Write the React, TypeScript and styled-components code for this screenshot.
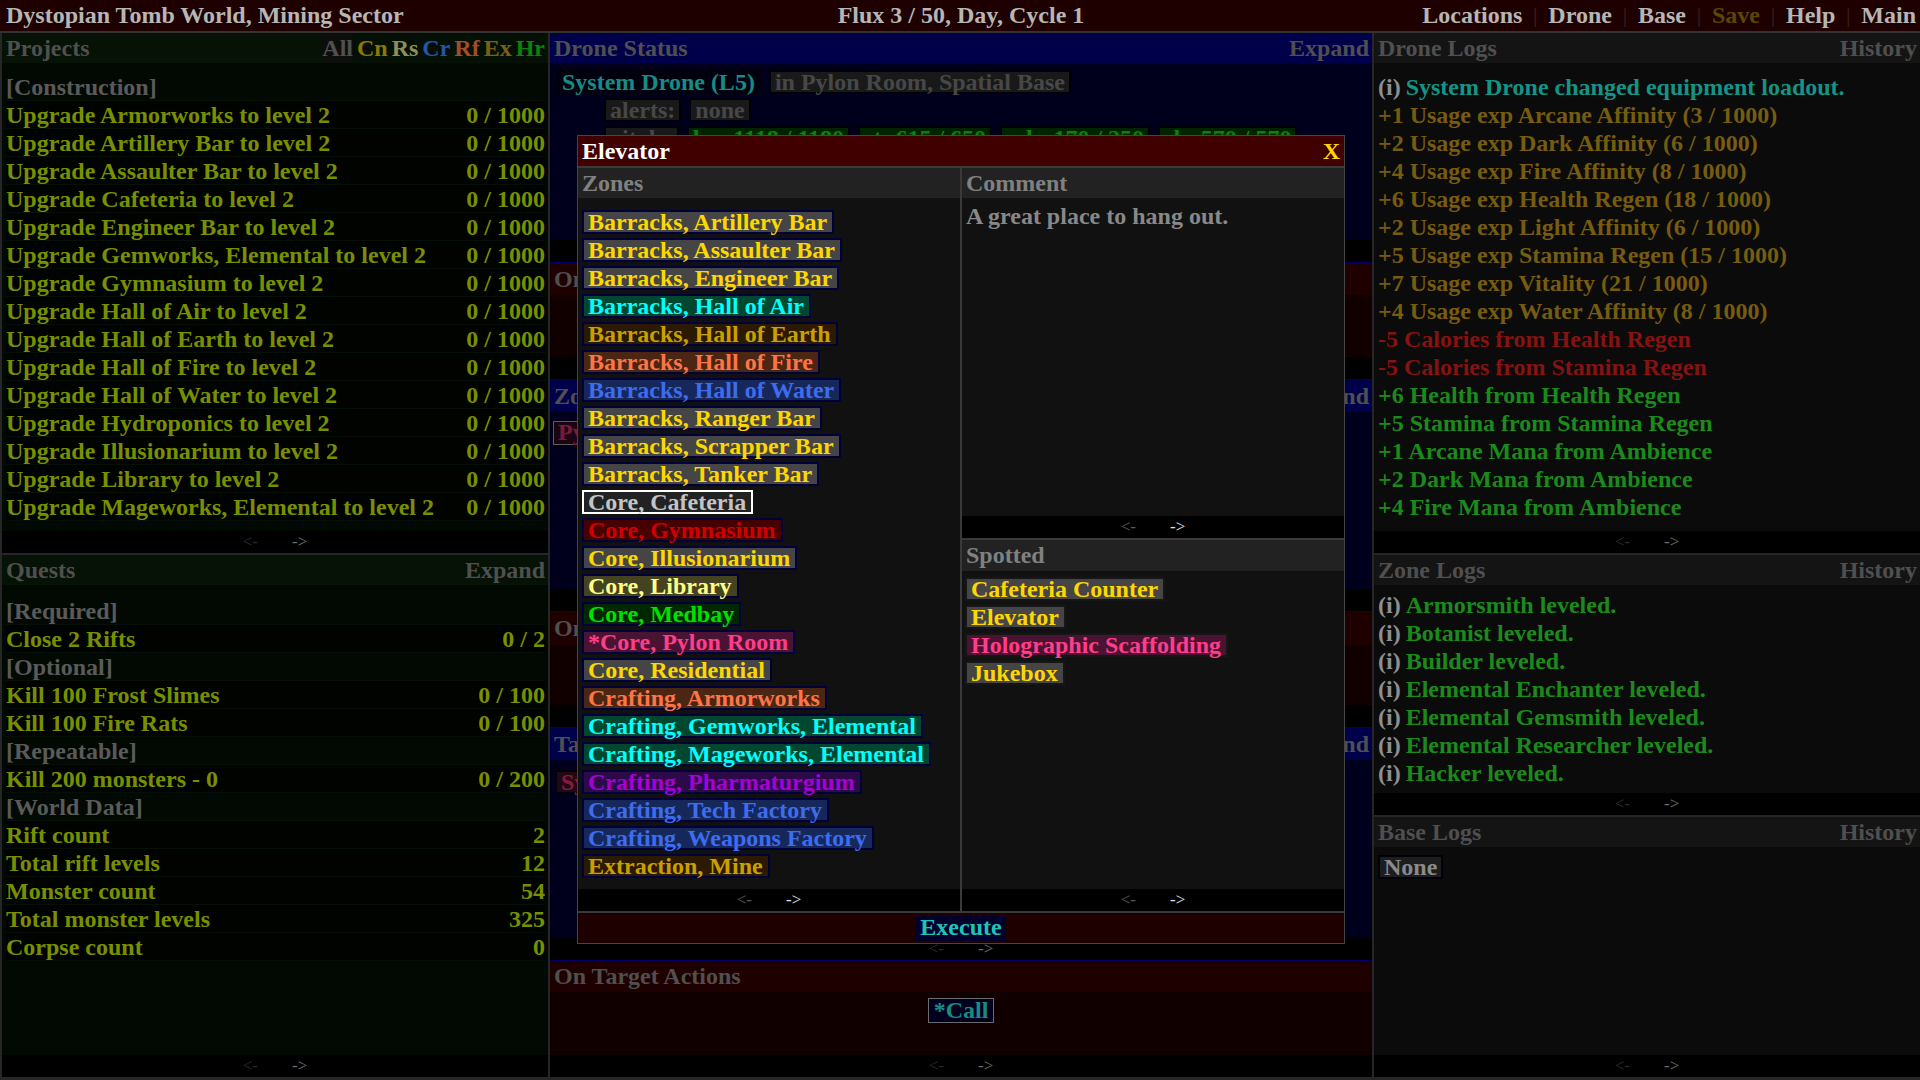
import React from "react";
import styled, { createGlobalStyle, css } from "styled-components";

const GlobalStyle = createGlobalStyle`
  html, body { margin: 0; padding: 0; background: #000; }
  body {
    font-family: "Liberation Serif", "Times New Roman", serif;
    font-weight: bold;
    font-size: 24px;
    overflow: hidden;
  }
  * { box-sizing: border-box; }
`;

type Theme = "green" | "blue" | "red" | "gray";

const themes: Record<Theme, { head: string; body: string; line: string }> = {
  green: { head: "#051205", body: "#020902", line: "#0a1a0a" },
  blue: { head: "#00004a", body: "#00001c", line: "#00006a" },
  red: { head: "#1f0000", body: "#110000", line: "#00006a" },
  gray: { head: "#141414", body: "#0b0b0b", line: "#1a1a1a" },
};

const Page = styled.div`
  position: relative;
  width: 1920px;
  height: 1080px;
  display: flex;
  flex-direction: column;
  background: #262626;
`;

const TopBar = styled.header`
  flex: none;
  height: 33px;
  display: grid;
  grid-template-columns: 1fr auto 1fr;
  align-items: center;
  background: #1e0000;
  border-bottom: 2px solid #333;
  padding: 0 4px 0 6px;
  color: #b6b6b6;
  line-height: 31px;
  white-space: nowrap;
`;

const Nav = styled.nav`
  justify-self: end;
  display: flex;
  align-items: center;
`;

const NavItem = styled.span<{ $dim?: boolean }>`
  color: ${(p) => (p.$dim ? "#5c4600" : "#b6b6b6")};
`;

const NavSep = styled.span`
  color: #3c2424;
  font-weight: normal;
  font-size: 20px;
  margin: 0 11px;
`;

const Columns = styled.main`
  flex: 1;
  min-height: 0;
  display: grid;
  grid-template-columns: 546px 822px 1fr;
  column-gap: 2px;
  padding: 0 0 3px 2px;
`;

const Column = styled.div<{ $gap: number }>`
  display: flex;
  flex-direction: column;
  gap: ${(p) => p.$gap}px;
  min-height: 0;
  overflow: hidden;
`;

const Section = styled.section<{ $theme: Theme; $h?: number; $line?: boolean }>`
  display: flex;
  flex-direction: column;
  background: ${(p) => themes[p.$theme].body};
  ${(p) => (p.$h ? css`flex: none; height: ${p.$h}px;` : css`flex: 1;`)}
  ${(p) => p.$line && css`border-top: 1px solid ${themes[p.$theme].line};`}
  min-height: 0;
  overflow: hidden;
`;

const SectionHead = styled.div<{ $theme: Theme; $h?: number }>`
  flex: none;
  height: ${(p) => p.$h ?? 30}px;
  display: flex;
  align-items: center;
  justify-content: space-between;
  background: ${(p) => themes[p.$theme].head};
  color: #4f4f4f;
  padding: 0 3px 0 4px;
  white-space: nowrap;
`;

const HeadAction = styled.span`
  color: #4f4f4f;
`;

const Filters = styled.div`
  display: flex;
  align-self: stretch;
  align-items: center;
  gap: 4px;
  background: #031003;
`;

const FilterTab = styled.span<{ $c: string; $sel?: boolean }>`
  color: ${(p) => p.$c};
  align-self: stretch;
  display: flex;
  align-items: center;
  background: ${(p) => (p.$sel ? "#0c0e0c" : "transparent")};
`;

const Body = styled.div<{ $pt?: number; $px?: number }>`
  flex: 1;
  min-height: 0;
  padding: ${(p) => p.$pt ?? 10}px ${(p) => p.$px ?? 3}px 0 ${(p) => p.$px ?? 4}px;
  overflow: hidden;
`;

const Row = styled.div<{ $kind: "cat" | "item" }>`
  height: 28px;
  line-height: 28px;
  display: flex;
  justify-content: space-between;
  white-space: nowrap;
  color: ${(p) => (p.$kind === "cat" ? "#5a5a5a" : "#789000")};
  background: ${(p) => (p.$kind === "cat" ? "transparent" : "#010301")};
  box-shadow: inset 0 -1px 0 #071007;
`;

const Pager = styled.div<{ $bright?: boolean }>`
  flex: none;
  height: 22px;
  background: #000;
  display: flex;
  justify-content: center;
  align-items: center;
  gap: 34px;
  font-weight: normal;
  font-size: 17px;
  line-height: 22px;
  & > span:first-child { color: ${(p) => (p.$bright ? "#5c5c5c" : "#2c2c2c")}; }
  & > span:last-child { color: ${(p) => (p.$bright ? "#e0e0e0" : "#707070")}; }
`;

const LogLine = styled.div<{ $c: string }>`
  height: 28px;
  line-height: 28px;
  white-space: nowrap;
  color: ${(p) => p.$c};
`;

const Info = styled.span`
  color: #8f8f8f;
  margin-right: 5px;
`;

const ChipRow = styled.div<{ $indent?: number }>`
  display: flex;
  gap: 8px;
  height: 28px;
  align-items: center;
  padding-left: ${(p) => p.$indent ?? 0}px;
  white-space: nowrap;
`;

const DimChip = styled.span<{ $fg: string; $bg: string; $bd?: string }>`
  display: inline-block;
  height: 24px;
  line-height: 20px;
  padding: 0 4px;
  border: ${(p) => (p.$bd ? `1px solid ${p.$bd}` : "2px solid #000008")};
  background: ${(p) => p.$bg};
  color: ${(p) => p.$fg};
`;

const ActionArea = styled.div`
  flex: 1;
  display: flex;
  justify-content: center;
  padding-top: 6px;
`;

const CallButton = styled.span`
  display: inline-block;
  height: 25px;
  line-height: 22px;
  padding: 0 5px;
  border: 1px solid #6c6c6c;
  background: #00001e;
  color: #178c82;
`;

/* ---------- Modal ---------- */

const Modal = styled.div`
  position: absolute;
  left: 577px;
  top: 135px;
  width: 768px;
  height: 809px;
  border: 1px solid #454545;
  background: #111;
  display: flex;
  flex-direction: column;
`;

const ModalTitle = styled.div`
  flex: none;
  height: 32px;
  border-bottom: 2px solid #3a3a3a;
  background: #400000;
  display: flex;
  align-items: center;
  justify-content: space-between;
  padding: 0 4px 0 4px;
  color: #fff;
  line-height: 30px;
`;

const CloseX = styled.span`
  color: #ffd700;
`;

const Panes = styled.div`
  flex: 1;
  min-height: 0;
  display: grid;
  grid-template-columns: 1fr 1fr;
  column-gap: 2px;
  background: #3a3a3a;
`;

const Pane = styled.div`
  display: flex;
  flex-direction: column;
  background: #111;
  min-height: 0;
`;

const PaneHead = styled.div<{ $top?: boolean }>`
  flex: none;
  height: ${(p) => (p.$top ? 33 : 30)}px;
  background: #222;
  color: #808080;
  padding: 0 4px;
  line-height: 30px;
  ${(p) => p.$top && css`border-top: 2px solid #3a3a3a;`}
`;

const ChipList = styled.div<{ $pt: number; $pl: number }>`
  flex: 1;
  min-height: 0;
  display: flex;
  flex-direction: column;
  align-items: flex-start;
  gap: 4px;
  padding: ${(p) => p.$pt}px 0 0 ${(p) => p.$pl}px;
`;

const ZoneChip = styled.span<{ $fg: string; $bg: string; $bd: string }>`
  display: inline-block;
  height: 24px;
  line-height: 20px;
  padding: 0 5px 0 4px;
  border: 2px solid ${(p) => p.$bd};
  background: ${(p) => p.$bg};
  color: ${(p) => p.$fg};
  white-space: nowrap;
`;

const CommentBody = styled.div`
  flex: none;
  height: 318px;
  padding: 4px 4px 0;
  color: #888;
  line-height: 28px;
`;

const ExecuteBar = styled.div`
  flex: none;
  height: 32px;
  border-top: 2px solid #3a3a3a;
  background: #1e0000;
  display: flex;
  justify-content: center;
  align-items: center;
`;

const ExecuteButton = styled.span`
  display: inline-block;
  height: 25px;
  line-height: 22px;
  padding: 0 4px;
  background: #00002c;
  color: #1fc4b6;
`;

/* ---------- Data ---------- */

const zonePalette = {
  bar: { fg: "#ffd700", bg: "#454545" },
  air: { fg: "#00ffff", bg: "#00472f" },
  earth: { fg: "#c9a000", bg: "#2b1a00" },
  fire: { fg: "#ff7446", bg: "#4b2612" },
  water: { fg: "#3e6cf0", bg: "#16285a" },
  selected: { fg: "#c4c4c4", bg: "#222222" },
  gym: { fg: "#d00000", bg: "#470000" },
  library: { fg: "#ffff88", bg: "#45431f" },
  medbay: { fg: "#00e000", bg: "#002800" },
  pylon: { fg: "#ff3d8a", bg: "#4a1332" },
  pharma: { fg: "#a600d8", bg: "#2c0a47" },
};
type ZTone = keyof typeof zonePalette;

const zones: [string, ZTone][] = [
  ["Barracks, Artillery Bar", "bar"],
  ["Barracks, Assaulter Bar", "bar"],
  ["Barracks, Engineer Bar", "bar"],
  ["Barracks, Hall of Air", "air"],
  ["Barracks, Hall of Earth", "earth"],
  ["Barracks, Hall of Fire", "fire"],
  ["Barracks, Hall of Water", "water"],
  ["Barracks, Ranger Bar", "bar"],
  ["Barracks, Scrapper Bar", "bar"],
  ["Barracks, Tanker Bar", "bar"],
  ["Core, Cafeteria", "selected"],
  ["Core, Gymnasium", "gym"],
  ["Core, Illusionarium", "bar"],
  ["Core, Library", "library"],
  ["Core, Medbay", "medbay"],
  ["*Core, Pylon Room", "pylon"],
  ["Core, Residential", "bar"],
  ["Crafting, Armorworks", "fire"],
  ["Crafting, Gemworks, Elemental", "air"],
  ["Crafting, Mageworks, Elemental", "air"],
  ["Crafting, Pharmaturgium", "pharma"],
  ["Crafting, Tech Factory", "water"],
  ["Crafting, Weapons Factory", "water"],
  ["Extraction, Mine", "earth"],
];

const spotted: [string, ZTone][] = [
  ["Cafeteria Counter", "bar"],
  ["Elevator", "bar"],
  ["Holographic Scaffolding", "pylon"],
  ["Jukebox", "bar"],
];

const projects = [
  "Armorworks", "Artillery Bar", "Assaulter Bar", "Cafeteria", "Engineer Bar",
  "Gemworks, Elemental", "Gymnasium", "Hall of Air", "Hall of Earth", "Hall of Fire",
  "Hall of Water", "Hydroponics", "Illusionarium", "Library", "Mageworks, Elemental",
];

const quests: [string, string | null][] = [
  ["[Required]", null],
  ["Close 2 Rifts", "0 / 2"],
  ["[Optional]", null],
  ["Kill 100 Frost Slimes", "0 / 100"],
  ["Kill 100 Fire Rats", "0 / 100"],
  ["[Repeatable]", null],
  ["Kill 200 monsters - 0", "0 / 200"],
  ["[World Data]", null],
  ["Rift count", "2"],
  ["Total rift levels", "12"],
  ["Monster count", "54"],
  ["Total monster levels", "325"],
  ["Corpse count", "0"],
];

const GOLD = "#765c0e";
const RED = "#861212";
const GREEN = "#1b8a1b";
const TEAL = "#149486";

const droneLogs: [string, string][] = [
  ["+1 Usage exp Arcane Affinity (3 / 1000)", GOLD],
  ["+2 Usage exp Dark Affinity (6 / 1000)", GOLD],
  ["+4 Usage exp Fire Affinity (8 / 1000)", GOLD],
  ["+6 Usage exp Health Regen (18 / 1000)", GOLD],
  ["+2 Usage exp Light Affinity (6 / 1000)", GOLD],
  ["+5 Usage exp Stamina Regen (15 / 1000)", GOLD],
  ["+7 Usage exp Vitality (21 / 1000)", GOLD],
  ["+4 Usage exp Water Affinity (8 / 1000)", GOLD],
  ["-5 Calories from Health Regen", RED],
  ["-5 Calories from Stamina Regen", RED],
  ["+6 Health from Health Regen", GREEN],
  ["+5 Stamina from Stamina Regen", GREEN],
  ["+1 Arcane Mana from Ambience", GREEN],
  ["+2 Dark Mana from Ambience", GREEN],
  ["+4 Fire Mana from Ambience", GREEN],
];

const zoneLogs = [
  "Armorsmith leveled.",
  "Botanist leveled.",
  "Builder leveled.",
  "Elemental Enchanter leveled.",
  "Elemental Gemsmith leveled.",
  "Elemental Researcher leveled.",
  "Hacker leveled.",
];

const filters: [string, string][] = [
  ["Cn", "#8c7a00"],
  ["Rs", "#8e8e58"],
  ["Cr", "#2a52a8"],
  ["Rf", "#a44c2a"],
  ["Ex", "#7c6012"],
  ["Hr", "#0c820c"],
];

const PagerBar = ({ bright }: { bright?: boolean }) => (
  <Pager $bright={bright}>
    <span>&lt;-</span>
    <span>-&gt;</span>
  </Pager>
);

export default function App() {
  return (
    <>
      <GlobalStyle />
      <Page>
        <TopBar>
          <span>Dystopian Tomb World, Mining Sector</span>
          <span>Flux 3 / 50, Day, Cycle 1</span>
          <Nav>
            <NavItem>Locations</NavItem>
            <NavSep>|</NavSep>
            <NavItem>Drone</NavItem>
            <NavSep>|</NavSep>
            <NavItem>Base</NavItem>
            <NavSep>|</NavSep>
            <NavItem $dim>Save</NavItem>
            <NavSep>|</NavSep>
            <NavItem>Help</NavItem>
            <NavSep>|</NavSep>
            <NavItem>Main</NavItem>
          </Nav>
        </TopBar>

        <Columns>
          {/* Left column */}
          <Column $gap={2}>
            <Section $theme="green" $h={520}>
              <SectionHead $theme="green">
                <span>Projects</span>
                <Filters>
                  <FilterTab $c="#505050" $sel>All</FilterTab>
                  {filters.map(([f, c]) => (
                    <FilterTab key={f} $c={c}>{f}</FilterTab>
                  ))}
                </Filters>
              </SectionHead>
              <Body>
                <Row $kind="cat"><span>[Construction]</span></Row>
                {projects.map((p) => (
                  <Row $kind="item" key={p}>
                    <span>Upgrade {p} to level 2</span>
                    <span>0 / 1000</span>
                  </Row>
                ))}
              </Body>
              <PagerBar />
            </Section>
            <Section $theme="green">
              <SectionHead $theme="green">
                <span>Quests</span>
                <HeadAction>Expand</HeadAction>
              </SectionHead>
              <Body $pt={12}>
                {quests.map(([n, v]) => (
                  <Row $kind={v === null ? "cat" : "item"} key={n}>
                    <span>{n}</span>
                    {v !== null && <span>{v}</span>}
                  </Row>
                ))}
              </Body>
              <PagerBar />
            </Section>
          </Column>

          {/* Middle column */}
          <Column $gap={0}>
            <Section $theme="blue" $h={229}>
              <SectionHead $theme="blue">
                <span>Drone Status</span>
                <HeadAction>Expand</HeadAction>
              </SectionHead>
              <Body $pt={5} $px={6}>
                <ChipRow>
                  <DimChip $fg="#178c84" $bg="#00000f">System Drone (L5)</DimChip>
                  <DimChip $fg="#474747" $bg="#191919">in Pylon Room, Spatial Base</DimChip>
                </ChipRow>
                <ChipRow $indent={48}>
                  <DimChip $fg="#474747" $bg="#191919">alerts:</DimChip>
                  <DimChip $fg="#474747" $bg="#191919">none</DimChip>
                </ChipRow>
                <ChipRow $indent={48}>
                  <DimChip $fg="#474747" $bg="#191919">vitals:</DimChip>
                  <DimChip $fg="#0c820c" $bg="#002400">hp: 1118 / 1180</DimChip>
                  <DimChip $fg="#0c820c" $bg="#002400">st: 615 / 650</DimChip>
                  <DimChip $fg="#0c820c" $bg="#002400">mh: 170 / 250</DimChip>
                  <DimChip $fg="#0c820c" $bg="#002400">sh: 570 / 570</DimChip>
                </ChipRow>
              </Body>
              <PagerBar />
            </Section>
            <Section $theme="red" $h={117} $line>
              <SectionHead $theme="red" $h={32}>
                <span>On Self Actions</span>
              </SectionHead>
              <Body />
              <PagerBar />
            </Section>
            <Section $theme="blue" $h={232} $line>
              <SectionHead $theme="blue" $h={32}>
                <span>Zone Status</span>
                <HeadAction>Expand</HeadAction>
              </SectionHead>
              <Body $pt={7} $px={3}>
                <ChipRow>
                  <DimChip $fg="#7c1a3c" $bg="#1c0512" $bd="#5a5a5a">Pylon Room</DimChip>
                </ChipRow>
              </Body>
              <PagerBar />
            </Section>
            <Section $theme="red" $h={116} $line>
              <SectionHead $theme="red" $h={33}>
                <span>On Zone Actions</span>
              </SectionHead>
              <Body />
              <PagerBar />
            </Section>
            <Section $theme="blue" $h={233} $line>
              <SectionHead $theme="blue" $h={32}>
                <span>Target Status</span>
                <HeadAction>Expand</HeadAction>
              </SectionHead>
              <Body $pt={8} $px={5}>
                <ChipRow>
                  <DimChip $fg="#8a1a3c" $bg="#220814">System Drone</DimChip>
                </ChipRow>
              </Body>
              <PagerBar />
            </Section>
            <Section $theme="red" $line>
              <SectionHead $theme="red" $h={31}>
                <span>On Target Actions</span>
              </SectionHead>
              <ActionArea>
                <CallButton>*Call</CallButton>
              </ActionArea>
              <PagerBar />
            </Section>
          </Column>

          {/* Right column */}
          <Column $gap={2}>
            <Section $theme="gray" $h={520}>
              <SectionHead $theme="gray">
                <span>Drone Logs</span>
                <HeadAction>History</HeadAction>
              </SectionHead>
              <Body>
                <LogLine $c={TEAL}>
                  <Info>(i)</Info>System Drone changed equipment loadout.
                </LogLine>
                {droneLogs.map(([t, c]) => (
                  <LogLine $c={c} key={t}>{t}</LogLine>
                ))}
              </Body>
              <PagerBar />
            </Section>
            <Section $theme="gray" $h={260}>
              <SectionHead $theme="gray">
                <span>Zone Logs</span>
                <HeadAction>History</HeadAction>
              </SectionHead>
              <Body $pt={6}>
                {zoneLogs.map((t) => (
                  <LogLine $c={GREEN} key={t}>
                    <Info>(i)</Info>{t}
                  </LogLine>
                ))}
              </Body>
              <PagerBar />
            </Section>
            <Section $theme="gray">
              <SectionHead $theme="gray">
                <span>Base Logs</span>
                <HeadAction>History</HeadAction>
              </SectionHead>
              <Body $pt={6} $px={4}>
                <ChipRow>
                  <DimChip $fg="#8a8a8a" $bg="#1d1d1d">None</DimChip>
                </ChipRow>
              </Body>
              <PagerBar />
            </Section>
          </Column>
        </Columns>

        <Modal>
          <ModalTitle>
            <span>Elevator</span>
            <CloseX>X</CloseX>
          </ModalTitle>
          <Panes>
            <Pane>
              <PaneHead>Zones</PaneHead>
              <ChipList $pt={12} $pl={4}>
                {zones.map(([z, t]) => (
                  <ZoneChip
                    key={z}
                    $fg={zonePalette[t].fg}
                    $bg={zonePalette[t].bg}
                    $bd={t === "selected" ? "#ffffff" : "#00003a"}
                  >
                    {z}
                  </ZoneChip>
                ))}
              </ChipList>
              <PagerBar bright />
            </Pane>
            <Pane>
              <PaneHead>Comment</PaneHead>
              <CommentBody>A great place to hang out.</CommentBody>
              <PagerBar bright />
              <PaneHead $top>Spotted</PaneHead>
              <ChipList $pt={6} $pl={3}>
                {spotted.map(([s, t]) => (
                  <ZoneChip key={s} $fg={zonePalette[t].fg} $bg={zonePalette[t].bg} $bd="#161616">
                    {s}
                  </ZoneChip>
                ))}
              </ChipList>
              <PagerBar bright />
            </Pane>
          </Panes>
          <ExecuteBar>
            <ExecuteButton>Execute</ExecuteButton>
          </ExecuteBar>
        </Modal>
      </Page>
    </>
  );
}
